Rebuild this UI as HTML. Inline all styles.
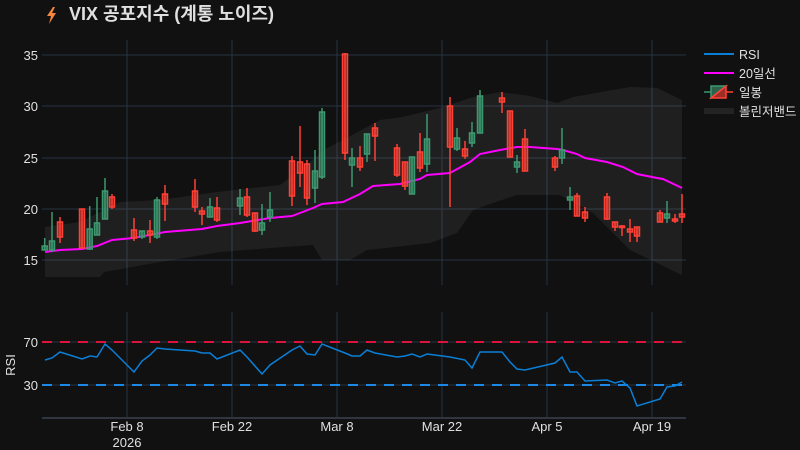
<!DOCTYPE html>
<html><head><meta charset="utf-8"><style>
html,body{margin:0;padding:0;background:#111111;width:800px;height:450px;overflow:hidden}
svg{display:block}
text{font-family:"Liberation Sans","Noto Sans CJK KR",sans-serif;fill:#e0e0e0}
.g line,.r line{stroke-width:1.5}
.g line{stroke:#3d9970}.g rect{stroke:#3d9970;fill:rgba(61,153,112,0.5);stroke-width:1.5}
.r line{stroke:#ff4136}.r rect{stroke:#ff4136;fill:rgba(255,65,54,0.5);stroke-width:1.5}
</style></head><body>
<svg width="800" height="450" viewBox="0 0 800 450" xmlns="http://www.w3.org/2000/svg">
<rect width="800" height="450" fill="#111111"/>
<g stroke="#283442" stroke-width="1">
<line x1="42" x2="686" y1="55" y2="55"/><line x1="42" x2="686" y1="106" y2="106"/><line x1="42" x2="686" y1="158" y2="158"/><line x1="42" x2="686" y1="209" y2="209"/><line x1="42" x2="686" y1="260" y2="260"/>
<line x1="127" x2="127" y1="40" y2="285"/><line x1="232" x2="232" y1="40" y2="285"/><line x1="337" x2="337" y1="40" y2="285"/><line x1="442" x2="442" y1="40" y2="285"/><line x1="547" x2="547" y1="40" y2="285"/><line x1="652" x2="652" y1="40" y2="285"/>
<line x1="127" x2="127" y1="312" y2="417"/><line x1="232" x2="232" y1="312" y2="417"/><line x1="337" x2="337" y1="312" y2="417"/><line x1="442" x2="442" y1="312" y2="417"/><line x1="547" x2="547" y1="312" y2="417"/><line x1="652" x2="652" y1="312" y2="417"/>
<line x1="42" x2="686" y1="342" y2="342"/><line x1="42" x2="686" y1="385" y2="385"/>
</g>
<line x1="42" x2="686" y1="418" y2="418" stroke="#3a4350" stroke-width="1.5"/>
<polygon fill="rgba(140,140,140,0.12)" points="45,227 80,222 100,212 120,202 160,200 217,192 280,185 300,170 327,148 343,140 380,120 403,117 443,107 470,98 500,92 530,96 557,103 573,97 630,87 657,88 682,100 682,275 630,250 593,213 560,195 517,195 490,204 473,210 457,233 430,243 367,250 350,260 322,260 313,245 270,248 220,252 160,262 104,272 100,277 45,277"/>
<polyline fill="none" stroke="#ff00ff" stroke-width="2" points="45,252 60,250 82,249 97,246 112,240 133,238 150,235 165,232 202,229 217,226 240,223 270,218 292,216 300,213 313,208 322,204 343,202 360,194 373,186 400,184 420,179 427,175 450,173 470,162 480,154 500,150 517,147 530,147 557,149 563,150 577,154 585,158 607,162 623,167 637,174 657,178 663,179 682,188"/>
<g class="g"><line x1="44.7" x2="44.7" y1="238" y2="250"/><rect x="42.2" y="246" width="5" height="4"/></g>
<g class="g"><line x1="52" x2="52" y1="212" y2="252"/><rect x="49.5" y="241" width="5" height="9"/></g>
<g class="r"><line x1="60" x2="60" y1="217" y2="243"/><rect x="57.5" y="222" width="5" height="15"/></g>
<g class="r"><line x1="82" x2="82" y1="209" y2="248"/><rect x="79.5" y="209" width="5" height="39"/></g>
<g class="g"><line x1="89.7" x2="89.7" y1="206" y2="250"/><rect x="87.2" y="229" width="5" height="20"/></g>
<g class="g"><line x1="97" x2="97" y1="197" y2="235"/><rect x="94.5" y="223" width="5" height="12"/></g>
<g class="g"><line x1="105" x2="105" y1="178" y2="219"/><rect x="102.5" y="191" width="5" height="28"/></g>
<g class="r"><line x1="112" x2="112" y1="194" y2="209"/><rect x="109.5" y="197" width="5" height="10"/></g>
<g class="r"><line x1="134" x2="134" y1="218" y2="241"/><rect x="131.5" y="230" width="5" height="8"/></g>
<g class="g"><line x1="142" x2="142" y1="231" y2="239"/><rect x="139.5" y="231" width="5" height="6"/></g>
<g class="r"><line x1="150" x2="150" y1="220" y2="243"/><rect x="147.5" y="231" width="5" height="4"/></g>
<g class="g"><line x1="157" x2="157" y1="197" y2="239"/><rect x="154.5" y="200" width="5" height="37"/></g>
<g class="r"><line x1="165" x2="165" y1="185" y2="221"/><rect x="162.5" y="194" width="5" height="10"/></g>
<g class="r"><line x1="195" x2="195" y1="179" y2="212"/><rect x="192.5" y="191" width="5" height="16"/></g>
<g class="r"><line x1="202" x2="202" y1="207" y2="225"/><rect x="199.5" y="211" width="5" height="3"/></g>
<g class="g"><line x1="210" x2="210" y1="198" y2="217"/><rect x="207.5" y="207" width="5" height="10"/></g>
<g class="r"><line x1="217" x2="217" y1="197" y2="222"/><rect x="214.5" y="208" width="5" height="12"/></g>
<g class="g"><line x1="240" x2="240" y1="189" y2="215"/><rect x="237.5" y="198" width="5" height="8"/></g>
<g class="r"><line x1="247" x2="247" y1="188" y2="217"/><rect x="244.5" y="197" width="5" height="18"/></g>
<g class="r"><line x1="255" x2="255" y1="213" y2="232"/><rect x="252.5" y="213" width="5" height="18"/></g>
<g class="g"><line x1="262" x2="262" y1="204" y2="235"/><rect x="259.5" y="223" width="5" height="7"/></g>
<g class="g"><line x1="270" x2="270" y1="192" y2="222"/><rect x="267.5" y="210" width="5" height="7"/></g>
<g class="r"><line x1="292" x2="292" y1="156" y2="206"/><rect x="289.5" y="161" width="5" height="35"/></g>
<g class="r"><line x1="300" x2="300" y1="126" y2="187"/><rect x="297.5" y="162" width="5" height="11"/></g>
<g class="r"><line x1="307" x2="307" y1="160" y2="205"/><rect x="304.5" y="164" width="5" height="34"/></g>
<g class="g"><line x1="315" x2="315" y1="150" y2="203"/><rect x="312.5" y="171" width="5" height="17"/></g>
<g class="g"><line x1="322" x2="322" y1="108" y2="179"/><rect x="319.5" y="112" width="5" height="65"/></g>
<g class="r"><line x1="345" x2="345" y1="53" y2="160"/><rect x="342.5" y="54" width="5" height="99"/></g>
<g class="g"><line x1="352" x2="352" y1="148" y2="187"/><rect x="349.5" y="158" width="5" height="7"/></g>
<g class="r"><line x1="360" x2="360" y1="146" y2="171"/><rect x="357.5" y="158" width="5" height="9"/></g>
<g class="g"><line x1="367" x2="367" y1="134" y2="162"/><rect x="364.5" y="134" width="5" height="20"/></g>
<g class="r"><line x1="375" x2="375" y1="123" y2="161"/><rect x="372.5" y="128" width="5" height="8"/></g>
<g class="r"><line x1="397" x2="397" y1="144" y2="177"/><rect x="394.5" y="148" width="5" height="27"/></g>
<g class="r"><line x1="405" x2="405" y1="162" y2="190"/><rect x="402.5" y="162" width="5" height="24"/></g>
<g class="g"><line x1="412" x2="412" y1="157" y2="194"/><rect x="409.5" y="157" width="5" height="37"/></g>
<g class="r"><line x1="420" x2="420" y1="133" y2="172"/><rect x="417.5" y="152" width="5" height="16"/></g>
<g class="g"><line x1="427" x2="427" y1="114" y2="172"/><rect x="424.5" y="139" width="5" height="25"/></g>
<g class="r"><line x1="450" x2="450" y1="97" y2="207"/><rect x="447.5" y="106" width="5" height="41"/></g>
<g class="g"><line x1="457" x2="457" y1="128" y2="151"/><rect x="454.5" y="138" width="5" height="11"/></g>
<g class="r"><line x1="465" x2="465" y1="141" y2="159"/><rect x="462.5" y="149" width="5" height="7"/></g>
<g class="g"><line x1="472" x2="472" y1="122" y2="147"/><rect x="469.5" y="133" width="5" height="10"/></g>
<g class="g"><line x1="480" x2="480" y1="90" y2="133"/><rect x="477.5" y="96" width="5" height="37"/></g>
<g class="r"><line x1="502" x2="502" y1="92" y2="113"/><rect x="499.5" y="98" width="5" height="4"/></g>
<g class="r"><line x1="510" x2="510" y1="111" y2="157"/><rect x="507.5" y="111" width="5" height="46"/></g>
<g class="g"><line x1="517" x2="517" y1="155" y2="173"/><rect x="514.5" y="162" width="5" height="5"/></g>
<g class="r"><line x1="525" x2="525" y1="129" y2="171"/><rect x="522.5" y="139" width="5" height="32"/></g>
<g class="r"><line x1="555" x2="555" y1="156" y2="171"/><rect x="552.5" y="158" width="5" height="9"/></g>
<g class="g"><line x1="562" x2="562" y1="128" y2="164"/><rect x="559.5" y="150" width="5" height="8"/></g>
<g class="g"><line x1="570" x2="570" y1="187" y2="210"/><rect x="567.5" y="197" width="5" height="3"/></g>
<g class="r"><line x1="577" x2="577" y1="193" y2="216"/><rect x="574.5" y="196" width="5" height="20"/></g>
<g class="r"><line x1="585" x2="585" y1="207" y2="222"/><rect x="582.5" y="212" width="5" height="6"/></g>
<g class="r"><line x1="607" x2="607" y1="193" y2="220"/><rect x="604.5" y="197" width="5" height="22"/></g>
<g class="r"><line x1="615" x2="615" y1="222" y2="231"/><rect x="612.5" y="222" width="5" height="5"/></g>
<g class="r"><line x1="622" x2="622" y1="225" y2="236"/><rect x="619.5" y="226" width="5" height="1.5"/></g>
<g class="r"><line x1="630" x2="630" y1="219" y2="242"/><rect x="627.5" y="229" width="5" height="3"/></g>
<g class="r"><line x1="637" x2="637" y1="227" y2="242"/><rect x="634.5" y="227" width="5" height="9"/></g>
<g class="r"><line x1="660" x2="660" y1="210" y2="222"/><rect x="657.5" y="213" width="5" height="9"/></g>
<g class="g"><line x1="667" x2="667" y1="201" y2="223"/><rect x="664.5" y="214" width="5" height="4"/></g>
<g class="r"><line x1="675" x2="675" y1="214" y2="223"/><rect x="672.5" y="219" width="5" height="2"/></g>
<g class="r"><line x1="682" x2="682" y1="194" y2="223"/><rect x="679.5" y="214" width="5" height="3"/></g>
<line x1="42" x2="686" y1="342" y2="342" stroke="#dc143c" stroke-width="2" stroke-dasharray="10,8"/>
<line x1="42" x2="686" y1="385" y2="385" stroke="#1e88e5" stroke-width="2" stroke-dasharray="10,8"/>
<polyline fill="none" stroke="#0a7fd8" stroke-width="1.5" points="45,360 52,358 60,352 82,359 90,356 97,357 105,344 112,350 134,372 142,361 150,355 157,348 165,349 195,351 202,353 210,353 217,359 240,350 247,357 262,374 270,365 292,350 300,346 307,354 315,355 322,344 345,353 352,356 360,356 367,350 375,353 397,357 405,356 412,354 420,357 427,354 450,357 465,360 472,368 480,352 502,352 510,362 517,369 525,370 555,363 562,357 570,372 577,372 585,381 607,380 615,383 622,381 630,388 637,406 660,399 667,387 675,386 682,382"/>
<g font-size="13" text-anchor="end">
<text x="38" y="60">35</text><text x="38" y="111">30</text><text x="38" y="163">25</text><text x="38" y="214">20</text><text x="38" y="265">15</text>
<text x="38" y="347">70</text><text x="38" y="390">30</text>
</g>
<text x="15" y="365" font-size="13" text-anchor="middle" transform="rotate(-90 15 365)">RSI</text>
<g font-size="13" text-anchor="middle">
<text x="127" y="431">Feb 8</text><text x="127" y="447">2026</text>
<text x="232" y="431">Feb 22</text><text x="337" y="431">Mar 8</text><text x="442" y="431">Mar 22</text><text x="547" y="431">Apr 5</text><text x="652" y="431">Apr 19</text>
</g>
<path d="M53,7 L47,16 L51,16 L49,24 L56,13 L52,13 L55,7 Z" fill="#f7863a"/>
<text x="69" y="20" font-size="18" font-weight="bold" fill="#e8e8e8">VIX 공포지수 (계통 노이즈)</text>
<line x1="704" x2="734" y1="54" y2="54" stroke="#0a7fd8" stroke-width="2"/>
<text x="739" y="59" font-size="12.5">RSI</text>
<line x1="704" x2="734" y1="73" y2="73" stroke="#ff00ff" stroke-width="2"/>
<text x="739" y="78" font-size="12.5">20일선</text>
<line x1="704" x2="711" y1="92" y2="92" stroke="#3d9970" stroke-width="1.5"/>
<line x1="726" x2="733" y1="92" y2="92" stroke="#ff4136" stroke-width="1.5"/>
<polygon points="711,86 726,86 711,98" fill="rgba(61,153,112,0.6)" stroke="#3d9970" stroke-width="1.5"/>
<polygon points="726,86 726,98 711,98" fill="rgba(255,65,54,0.6)" stroke="#ff4136" stroke-width="1.5"/>
<text x="739" y="97" font-size="12.5">일봉</text>
<rect x="704" y="108" width="30" height="6" fill="rgba(140,140,140,0.15)"/>
<text x="739" y="116" font-size="12.5">볼린저밴드</text>
</svg>
</body></html>
